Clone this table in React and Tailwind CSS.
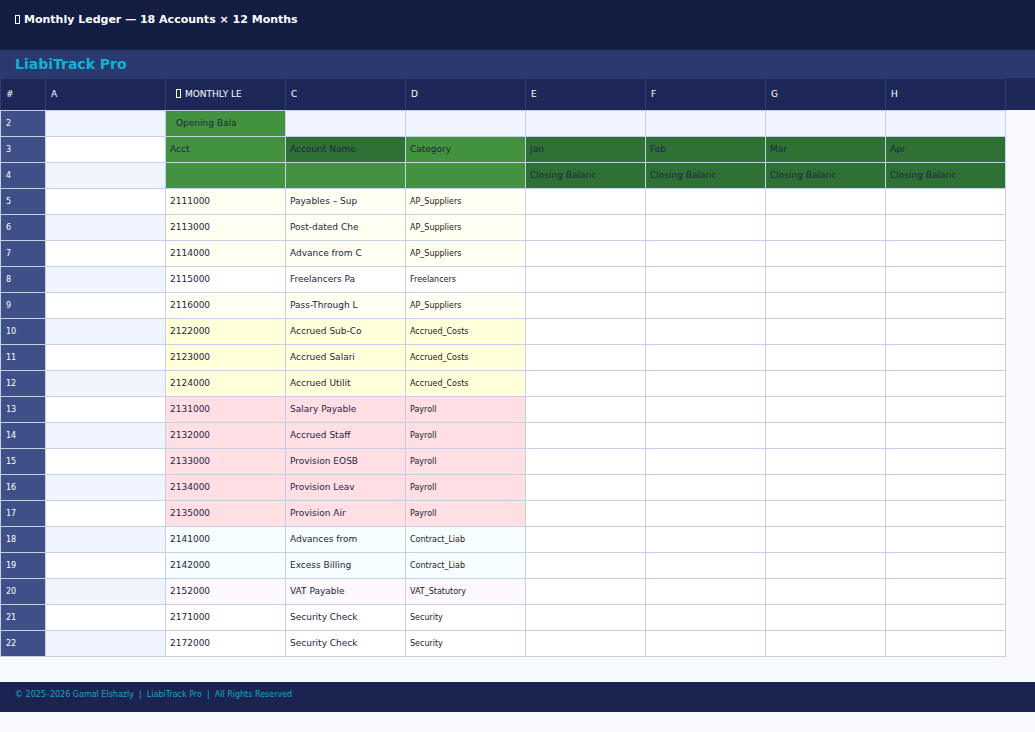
import React from 'react';

const FONT = { fontFamily: '"DejaVu Sans", "Liberation Sans", sans-serif' };

const MONTHS = ['Jan', 'Feb', 'Mar', 'Apr'];

// category -> tint used for B/C/D cells
const TINT = {
  AP_Suppliers: 'bg-[#fffff2]',
  Freelancers: 'bg-white',
  Accrued_Costs: 'bg-[#ffffd9]',
  Payroll: 'bg-[#ffdfe4]',
  Contract_Liab: 'bg-[#f5fdfe]',
  VAT_Statutory: 'bg-[#fdf7fe]',
  Security: 'bg-white',
};

const ACCOUNTS = [
  ['2111000', 'Payables – Sup', 'AP_Suppliers'],
  ['2113000', 'Post-dated Che', 'AP_Suppliers'],
  ['2114000', 'Advance from C', 'AP_Suppliers'],
  ['2115000', 'Freelancers Pa', 'Freelancers'],
  ['2116000', 'Pass-Through L', 'AP_Suppliers'],
  ['2122000', 'Accrued Sub-Co', 'Accrued_Costs'],
  ['2123000', 'Accrued Salari', 'Accrued_Costs'],
  ['2124000', 'Accrued Utilit', 'Accrued_Costs'],
  ['2131000', 'Salary Payable', 'Payroll'],
  ['2132000', 'Accrued Staff', 'Payroll'],
  ['2133000', 'Provision EOSB', 'Payroll'],
  ['2134000', 'Provision Leav', 'Payroll'],
  ['2135000', 'Provision Air', 'Payroll'],
  ['2141000', 'Advances from', 'Contract_Liab'],
  ['2142000', 'Excess Billing', 'Contract_Liab'],
  ['2152000', 'VAT Payable', 'VAT_Statutory'],
  ['2171000', 'Security Check', 'Security'],
  ['2172000', 'Security Check', 'Security'],
];

function Tofu() {
  return <span className="inline-block w-[5px] h-[9px] border border-current align-[-1px] mr-[4px]" />;
}

const cell = 'border border-[#c6d0e4] h-[26px] px-[4px] text-[9px] text-[#1e2444] whitespace-nowrap overflow-hidden';
const rowNum = 'border border-[#c6d0e4] bg-[#3f5089] text-white text-[8px] px-[5px]';
const lightG = 'bg-[#43923f]';
const darkG = 'bg-[#2f7134]';

export default function App() {
  const cols = ['A', 'B', 'C', 'D', 'E', 'F', 'G', 'H'];
  return (
    <div className="w-[1035px] h-[732px] bg-[#f8f9fe] flex flex-col overflow-hidden" style={FONT}>
      <div className="h-[50px] bg-[#141d42] px-[15px] pt-[12px] text-white text-[11px] font-bold">
        <Tofu />Monthly Ledger — 18 Accounts × 12 Months
      </div>
      <div className="h-[28px] bg-[#2b3a6e] px-[15px] flex items-center text-[14px] font-bold text-[#10b2d6]">
        LiabiTrack Pro
      </div>

      <div className="bg-[#1e2858] h-[32px]">
        <table className="table-fixed border-collapse w-[1005px]">
          <colgroup>
            <col className="w-[45px]" />
            {cols.map((c) => <col key={c} className="w-[120px]" />)}
          </colgroup>
          <thead>
            <tr>
              <th className="border border-[#2f3d70] h-[32px] text-left font-normal text-[9px] text-white px-[5px]">#</th>
              {cols.map((c) => (
                <th key={c} className={`border border-[#2f3d70] h-[32px] text-left font-normal text-[9px] text-white ${c === 'B' ? 'px-[10px]' : 'px-[5px]'}`}>
                  {c === 'B' ? <><Tofu />MONTHLY LE</> : c}
                </th>
              ))}
            </tr>
          </thead>
        </table>
      </div>

      <table className="table-fixed border-collapse w-[1005px]">
        <colgroup>
          <col className="w-[45px]" />
          {cols.map((c) => <col key={c} className="w-[120px]" />)}
        </colgroup>
        <tbody>
          <tr className="bg-[#eff4fe]">
            <td className={rowNum}>2</td>
            <td className={cell}></td>
            <td className={`${cell} ${lightG} px-[10px]`}>Opening Bala</td>
            {[0, 1, 2, 3, 4, 5].map((i) => <td key={i} className={cell}></td>)}
          </tr>
          <tr className="bg-white">
            <td className={rowNum}>3</td>
            <td className={cell}></td>
            <td className={`${cell} ${lightG}`}>Acct</td>
            <td className={`${cell} ${darkG}`}>Account Name</td>
            <td className={`${cell} ${lightG}`}>Category</td>
            {MONTHS.map((m) => <td key={m} className={`${cell} ${darkG}`}>{m}</td>)}
          </tr>
          <tr>
            <td className={rowNum}>4</td>
            <td className={`${cell} bg-[#eff4fe]`}></td>
            <td className={`${cell} ${lightG}`}></td>
            <td className={`${cell} ${lightG}`}></td>
            <td className={`${cell} ${lightG}`}></td>
            {MONTHS.map((m) => <td key={m} className={`${cell} ${darkG}`}>Closing Balanc</td>)}
          </tr>
          {ACCOUNTS.map(([acct, name, cat], i) => {
            const n = i + 5;
            const tint = TINT[cat];
            return (
              <tr key={acct}>
                <td className={rowNum}>{n}</td>
                <td className={`${cell} ${n % 2 === 0 ? 'bg-[#eff4fe]' : 'bg-white'}`}></td>
                <td className={`${cell} ${tint}`}>{acct}</td>
                <td className={`${cell} ${tint}`}>{name}</td>
                <td className={`${cell} ${tint} !text-[8px] !text-[#1a1a24]`}>{cat}</td>
                {MONTHS.map((m) => <td key={m} className={`${cell} bg-white`}></td>)}
              </tr>
            );
          })}
        </tbody>
      </table>

      <div className="mt-[25px] h-[30px] bg-[#1b2350] px-[15px] pb-[5px] flex items-center text-[8px] text-[#17a5c8]">
        © 2025–2026 Gamal Elshazly &nbsp;|&nbsp; LiabiTrack Pro &nbsp;|&nbsp; All Rights Reserved
      </div>
    </div>
  );
}
